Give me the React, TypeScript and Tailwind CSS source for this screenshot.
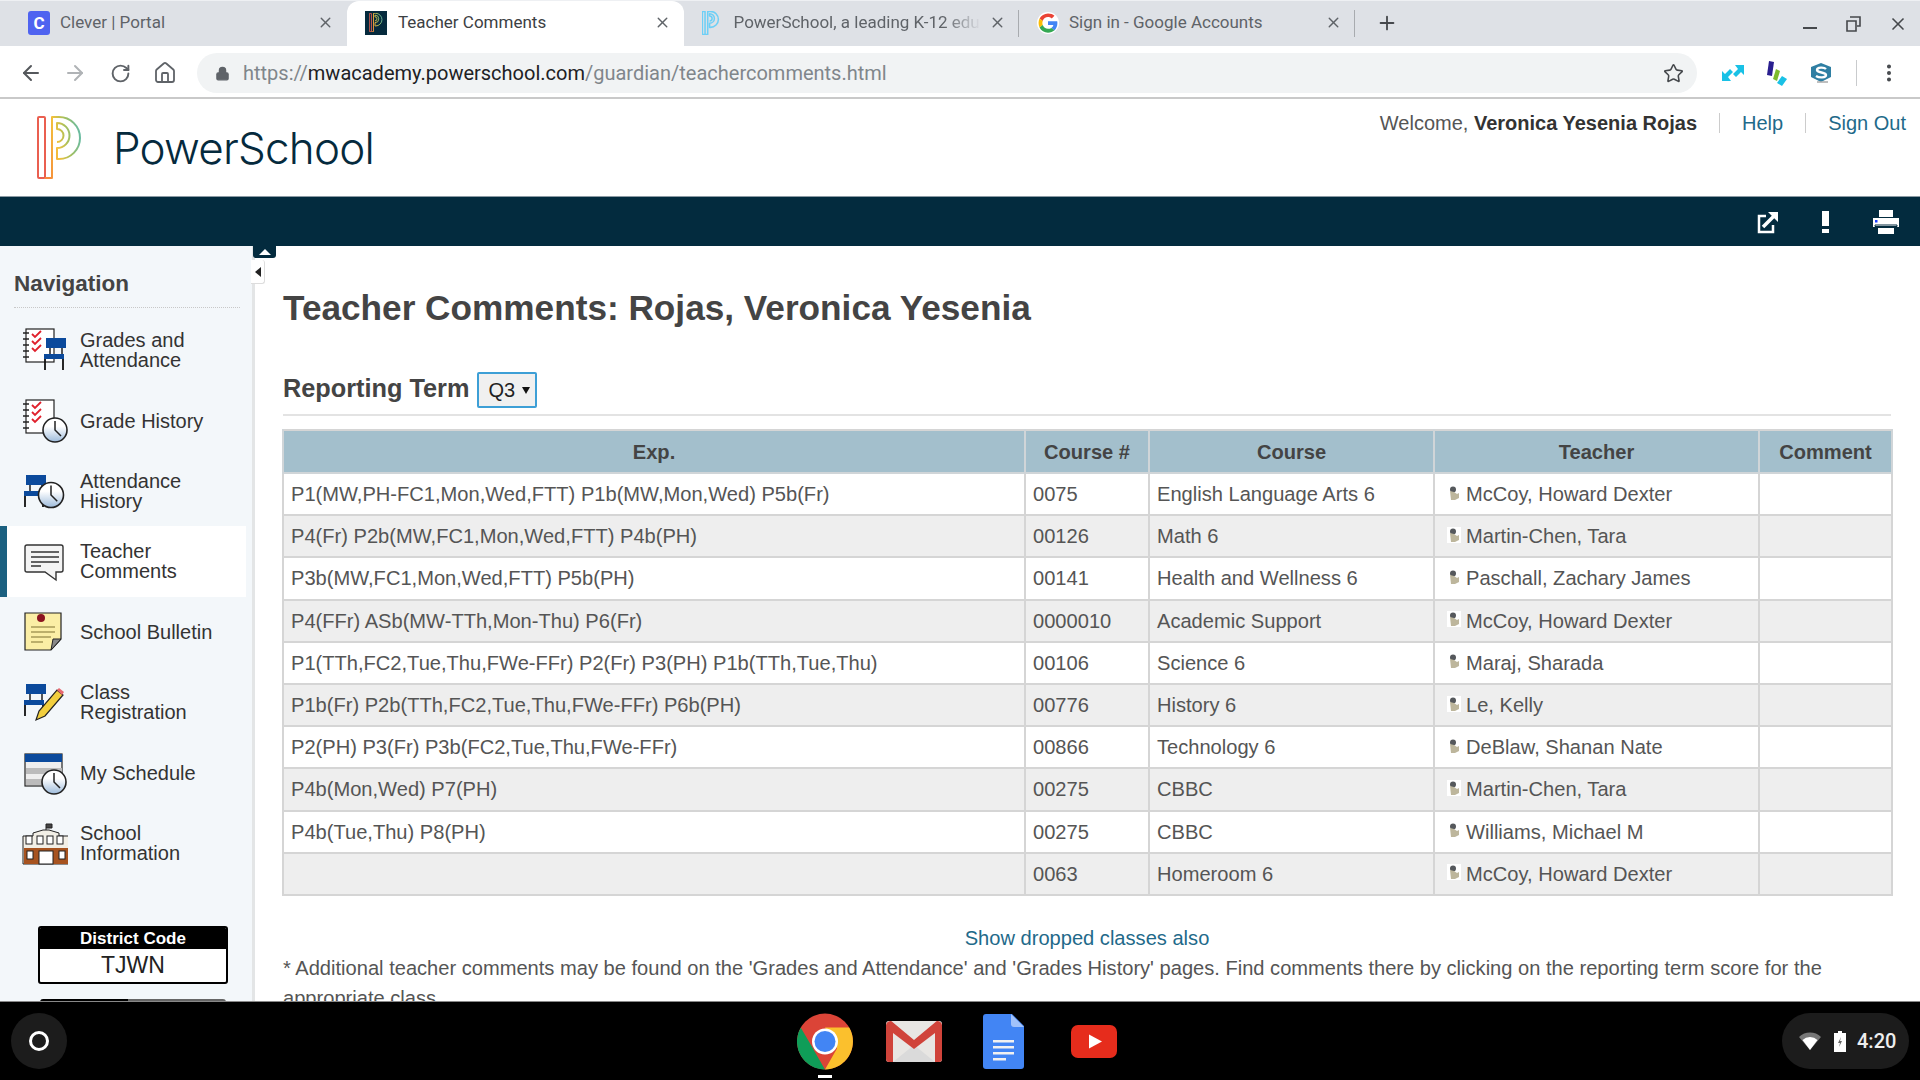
import type { ReactNode } from "react";
import { ArrowLeft, ArrowRight, Home, Lock, MoreVertical, Plus, RotateCw, Star, X } from "lucide-react";

const rows = [
  ["P1(MW,PH-FC1,Mon,Wed,FTT) P1b(MW,Mon,Wed) P5b(Fr)", "0075", "English Language Arts 6", "McCoy, Howard Dexter"],
  ["P4(Fr) P2b(MW,FC1,Mon,Wed,FTT) P4b(PH)", "00126", "Math 6", "Martin-Chen, Tara"],
  ["P3b(MW,FC1,Mon,Wed,FTT) P5b(PH)", "00141", "Health and Wellness 6", "Paschall, Zachary James"],
  ["P4(FFr) ASb(MW-TTh,Mon-Thu) P6(Fr)", "0000010", "Academic Support", "McCoy, Howard Dexter"],
  ["P1(TTh,FC2,Tue,Thu,FWe-FFr) P2(Fr) P3(PH) P1b(TTh,Tue,Thu)", "00106", "Science 6", "Maraj, Sharada"],
  ["P1b(Fr) P2b(TTh,FC2,Tue,Thu,FWe-FFr) P6b(PH)", "00776", "History 6", "Le, Kelly"],
  ["P2(PH) P3(Fr) P3b(FC2,Tue,Thu,FWe-FFr)", "00866", "Technology 6", "DeBlaw, Shanan Nate"],
  ["P4b(Mon,Wed) P7(PH)", "00275", "CBBC", "Martin-Chen, Tara"],
  ["P4b(Tue,Thu) P8(PH)", "00275", "CBBC", "Williams, Michael M"],
  ["", "0063", "Homeroom 6", "McCoy, Howard Dexter"],
];

function Notebook({ x = 0 }: { x?: number }) {
  return (
    <g transform={`translate(${x} 0)`}>
      <rect x="4" y="1" width="28" height="33" fill="#fff" stroke="#222" strokeWidth="1.2" />
      {[5, 11, 17, 23, 29].map((y) => (
        <path key={y} d={`M1 ${y}h6`} stroke="#222" strokeWidth="1.5" />
      ))}
      {[6, 13, 20].map((y) => (
        <path key={y} d={`M10 ${y}l3 3 6-6`} fill="none" stroke="#e0202c" strokeWidth="1.8" />
      ))}
    </g>
  );
}

function Clock({ cx, cy, r }: { cx: number; cy: number; r: number }) {
  return (
    <g>
      <defs>
        <linearGradient id="clockFill" x1="0" y1="0" x2="0" y2="1">
          <stop offset="0.35" stopColor="#fff" />
          <stop offset="1" stopColor="#9dbbdb" />
        </linearGradient>
      </defs>
      <circle cx={cx} cy={cy} r={r} fill="url(#clockFill)" stroke="#222" strokeWidth="1.6" />
      <path d={`M${cx} ${cy - r + 3}V${cy}l${r * 0.5} ${r * 0.5}`} fill="none" stroke="#222" strokeWidth="1.5" />
    </g>
  );
}

function Desk({ x = 0, y = 0 }: { x?: number; y?: number }) {
  return (
    <g transform={`translate(${x} ${y})`}>
      <rect x="2" y="0" width="20" height="10" fill="#0b4a9c" />
      <path d="M6 10v6M18 10v6" stroke="#111" strokeWidth="1.4" />
      <rect x="0" y="16" width="20" height="5" fill="#0b4a9c" />
      <path d="M1 21v11M19 21v11" stroke="#111" strokeWidth="1.8" />
    </g>
  );
}

function NavIcon({ name }: { name: string }) {
  return (
    <svg width="46" height="44" viewBox="0 0 46 44" className="shrink-0">
      {name === "grades" && (
        <>
          <Notebook />
          <g transform="translate(22 10)"><Desk /></g>
        </>
      )}
      {name === "gradeHistory" && (
        <>
          <Notebook />
          <Clock cx={33} cy={31} r={12} />
        </>
      )}
      {name === "attendance" && (
        <>
          <g transform="translate(2 6)"><Desk /></g>
          <Clock cx={29} cy={26} r={12.5} />
        </>
      )}
      {name === "comments" && (
        <path
          d="M5 6h34a2 2 0 0 1 2 2v23a2 2 0 0 1-2 2h-5v8l-11-8H5a2 2 0 0 1-2-2V8a2 2 0 0 1 2-2zM9 13h28M9 18h28M9 23h28M9 27h10"
          fill="#f4f4f4"
          stroke="#333"
          strokeWidth="1.4"
        />
      )}
      {name === "bulletin" && (
        <>
          <path d="M3 3h36v26l-10 11H3z" fill="#fbeea5" stroke="#222" strokeWidth="1.2" />
          <path d="M29 40l2-11h8z" fill="#888" stroke="#222" />
          <path d="M9 17h24M9 22h24M9 27h20M9 32h12" stroke="#a89a58" strokeWidth="1.4" />
          <circle cx="19" cy="8" r="4" fill="#8c1420" />
        </>
      )}
      {name === "registration" && (
        <>
          <Desk x={2} y={4} />
          <path d="M14 40l3-9 18-21 6 5-18 21z" fill="#f2cf3e" stroke="#222" strokeWidth="1.2" />
          <path d="M35 10l2-2 5 4-2 3z" fill="#e8686f" />
        </>
      )}
      {name === "schedule" && (
        <>
          <rect x="3" y="3" width="37" height="32" fill="#eee" stroke="#222" strokeWidth="1.2" />
          <rect x="3" y="3" width="37" height="8" fill="#0b4a9c" />
          <rect x="4" y="17" width="36" height="6" fill="#bbb" />
          <rect x="4" y="28" width="36" height="6" fill="#bbb" />
          <Clock cx={32} cy={31} r={12} />
        </>
      )}
      {name === "school" && (
        <>
          <path d="M24 3v8M24 3h6v4h-6" fill="#444" stroke="#222" />
          <path d="M1 15h10v-3l10-3h6l10 3v3h10v28H1z" fill="#f2efe6" stroke="#222" />
          <rect x="2" y="27" width="44" height="16" fill="#a7531f" />
          {[4, 15, 25, 35].map((x) => (
            <rect key={x} x={x} y="15" width="6" height="8" fill="#fff" stroke="#222" />
          ))}
          <rect x="5" y="30" width="6" height="8" fill="#fff" stroke="#222" />
          <rect x="37" y="30" width="6" height="8" fill="#fff" stroke="#222" />
          <rect x="17" y="30" width="14" height="13" fill="#fff" stroke="#222" />
        </>
      )}
    </svg>
  );
}

function NavItem({ icon, label, active }: { icon: string; label: ReactNode; active?: boolean }) {
  return (
    <div
      className={`flex h-[70.4px] items-center text-[20px] leading-[20px] text-[#333] ${
        active ? "-ml-[2px] w-[246px] border-l-[7px] border-[#1b6080] bg-white pl-[15px]" : "pl-[20px]"
      }`}
    >
      <NavIcon name={icon} />
      <div className="ml-[12px]">{label}</div>
    </div>
  );
}

function PLogo({ size, mono, width = 1.3 }: { size: number; mono?: string; width?: number }) {
  const grad = mono ?? "url(#psGrad)";
  return (
    <svg width={(size * 46) / 63} height={size} viewBox="0 0 46 63" fill="none" className="shrink-0">
      <defs>
        <linearGradient id="psGrad" x1="0" y1="0.6" x2="1" y2="0.3">
          <stop offset="0" stopColor="#f6883a" />
          <stop offset="0.35" stopColor="#f3c13c" />
          <stop offset="0.65" stopColor="#a9c05a" />
          <stop offset="1" stopColor="#69bba0" />
        </linearGradient>
      </defs>
      <rect x="1" y="1" width="7" height="61" rx="1" stroke={mono ?? "#ea5f50"} strokeWidth={width} />
      <path
        d="M8 62h7V1h7a21 21 0 0 1 0 42h-2V32a12.500 12.500 0 0 0 0-25v6a6.500 6.500 0 0 1 0 13"
        stroke={grad}
        strokeWidth={width}
        strokeLinejoin="round"
      />
    </svg>
  );
}

function Tab({
  width,
  icon,
  title,
  active,
  fade,
  divider,
}: {
  width: string;
  icon: ReactNode;
  title: string;
  active?: boolean;
  fade?: boolean;
  divider?: boolean;
}) {
  return (
    <div
      className={`flex h-[45px] shrink-0 items-center pb-[2px] pl-[28px] pr-[13px] ${width} ${
        active ? "rounded-t-[12px] bg-white text-[#3c4043]" : "text-[#5f6368]"
      } ${divider ? "relative after:absolute after:right-0 after:top-[9px] after:h-[27px] after:w-px after:bg-[#a8abaf]" : ""}`}
    >
      {icon}
      <span className={`ml-[10px] min-w-0 flex-1 overflow-hidden whitespace-nowrap text-[17px] ${fade ? "[mask-image:linear-gradient(to_right,#000_85%,transparent)]" : ""}`}>
        {title}
      </span>
      <X size={17} strokeWidth={2} className="ml-2 shrink-0 text-[#5f6368]" />
    </div>
  );
}

function GoogleG() {
  return (
    <svg width="22" height="22" viewBox="0 0 48 48" className="shrink-0">
      <circle cx="24" cy="24" r="24" fill="#fff" />
      <path fill="#EA4335" d="M24 11c3.3 0 6 1.2 8.200 3.100l5.900-5.900C34.500 4.900 29.700 3 24 3 16 3 9 7.600 5.600 14.300l6.900 5.300C14.200 14.600 18.700 11 24 11z" />
      <path fill="#4285F4" d="M44.500 24.700c0-1.500-.1-2.900-.4-4.300H24v8.200h11.600c-.5 2.700-2 4.900-4.300 6.400l6.700 5.200c4-3.600 6.500-9 6.500-15.500z" />
      <path fill="#FBBC05" d="M12.500 28.400c-.5-1.400-.8-2.900-.8-4.400s.3-3 .8-4.400l-6.900-5.300C4.200 17.200 3.400 20.500 3.400 24s.8 6.800 2.200 9.700l6.900-5.300z" />
      <path fill="#34A853" d="M24 45c5.700 0 10.400-1.900 13.900-5.100l-6.700-5.200c-1.900 1.300-4.300 2-7.200 2-5.300 0-9.800-3.600-11.500-8.400l-6.900 5.300C9 40.400 16 45 24 45z" />
    </svg>
  );
}

function ChromeIcon() {
  return (
    <svg width="56" height="57" viewBox="0 0 56 56">
      <circle cx="28" cy="28" r="28" fill="#db4437" />
      <path d="M28 28l-12 7.300L28 56a28 28 0 0 1-24.300-42L16 35z" fill="#0f9d58" />
      <path d="M28 56A28 28 0 0 0 52.200 14H28l12 21z" fill="#fbc02d" />
      <circle cx="28" cy="28" r="13" fill="#fff" />
      <circle cx="28" cy="28" r="10.500" fill="#4285f4" />
    </svg>
  );
}

function GmailIcon() {
  return (
    <svg width="56" height="41" viewBox="0 0 56 41">
      <rect width="56" height="41" rx="3" fill="#e8e6e3" />
      <path d="M7 41L28 24l21 17z" fill="#dadada" />
      <path d="M0 4a4 4 0 0 1 7-2.500L28 19 49 1.500A4 4 0 0 1 56 4v34a3 3 0 0 1-3 3h-4V12L28 28 7 12v29H3a3 3 0 0 1-3-3z" fill="#d0433a" />
    </svg>
  );
}

function DocsIcon() {
  return (
    <svg width="41" height="55" viewBox="0 0 41 55">
      <path d="M3 0h26l12 12v40a3 3 0 0 1-3 3H3a3 3 0 0 1-3-3V3a3 3 0 0 1 3-3z" fill="#4285f4" />
      <path d="M28 0l13 13H31a3 3 0 0 1-3-3z" fill="#a1c2fa" />
      <path d="M10 26h21v2.500H10zM10 32h21v2.500H10zM10 38h21v2.500H10zM10 44h13v2.500H10z" fill="#f1f1f1" />
    </svg>
  );
}

function YouTubeIcon() {
  return (
    <svg width="46" height="33" viewBox="0 0 46 33">
      <rect width="46" height="33" rx="7" fill="#e62c1c" />
      <path d="M18 9.500v14l13-7z" fill="#fff" />
    </svg>
  );
}

export default function App() {
  return (
    <div className="flex h-screen w-screen flex-col overflow-hidden bg-white font-['Liberation_Sans',Arial,sans-serif]">
      {/* browser tabs */}
      <div className="flex h-[46px] shrink-0 items-center border-t border-[#eef0f3] bg-[#dee1e6] font-['Roboto',sans-serif]">
        <Tab
          width="w-[347px]"
          title="Clever | Portal"
          icon={
            <div className="grid h-[24px] w-[22px] shrink-0 place-items-center rounded-[3px] bg-[#4f63f0] text-[17px] font-bold text-white">C</div>
          }
        />
        <Tab
          width="w-[337px]"
          active
          title="Teacher Comments"
          icon={
            <div className="-ml-[10px] mr-[1px] grid h-[24px] w-[22px] shrink-0 place-items-center bg-[#052a3d]">
              <PLogo size={19} width={3} />
            </div>
          }
        />
        <Tab
          width="w-[335px]"
          divider
          fade
          title="PowerSchool, a leading K-12 edu"
          icon={<div className="-ml-[10px] mr-[4px]"><PLogo size={24} mono="#6dcff6" width={4} /></div>}
        />
        <Tab width="w-[336px]" divider title="Sign in - Google Accounts" icon={<div className="-ml-[10px]"><GoogleG /></div>} />
        <Plus size={22} strokeWidth={2} className="mb-[2px] ml-[21px] text-[#45484c]" />
        <div className="ml-auto flex items-center pr-[12px] text-[#45484c]">
          <div className="mt-[8px] h-[2px] w-[14px] bg-[#45484c]" />
          <svg width="16" height="16" viewBox="0 0 16 16" fill="none" stroke="#45484c" strokeWidth="1.600" className="ml-[28px]">
            <path d="M5 1h10v9h-3M2 5h9v10H2z" />
          </svg>
          <X size={20} strokeWidth={2} className="ml-[27px]" />
        </div>
      </div>

      {/* toolbar */}
      <div className="flex h-[53px] shrink-0 items-center border-b-2 border-[#c9c9c9] bg-white pt-[3px] text-[#5f6368]">
        <ArrowLeft size={24} strokeWidth={2} className="ml-[19px] text-[#55585c]" />
        <ArrowRight size={24} strokeWidth={2} className="ml-[20px] text-[#b0b3b6]" />
        <RotateCw size={21} strokeWidth={2.2} className="ml-[23px]" />
        <Home size={24} strokeWidth={1.8} className="ml-[22px]" />
        <div className="ml-[20px] flex h-[40px] w-[1500px] items-center rounded-full bg-[#f1f3f4] pl-[18px] pr-[13px] font-['Roboto',sans-serif] text-[20px]">
          <Lock size={15} fill="#5f6368" strokeWidth={2} />
          <span className="ml-[13px] text-[#80868b]">
            https://<span className="text-[#202124]">mwacademy.powerschool.com</span>/guardian/teachercomments.html
          </span>
          <Star size={21} strokeWidth={1.8} className="ml-auto text-[#45484c]" />
        </div>
        <svg width="24" height="18" viewBox="0 0 24 18" className="ml-[24px]" fill="#19c1e6">
          <path d="M1 17V7l3 3 5-5 3 3-5 5 3 4z" />
          <path d="M23 1v10l-3-3-5 5-3-3 5-5-3-4z" />
        </svg>
        <svg width="22" height="26" viewBox="0 0 22 26" className="ml-[21px]">
          <path d="M3 1l5 1-2 14-5-1z" fill="#2a1f8f" />
          <path d="M10 9l4 2-3 10-4-2z" fill="#7dbb2c" />
          <path d="M16 16l5 3-5 7-5-3z" fill="#19c1e6" />
        </svg>
        <svg width="22" height="22" viewBox="0 0 22 22" className="ml-[22px]">
          <path d="M1 5l10-4 10 4v10l-10 5-10-5z" fill="#2f7fa3" />
          <path d="M16 7c-2-2-9-2-9 1s9 2 9 5-7 3-10 1" fill="none" stroke="#fff" strokeWidth="2.400" />
          <path d="M7 20h11" stroke="#aaa" strokeWidth="1.500" />
        </svg>
        <div className="ml-[24px] h-[26px] w-px bg-[#c9cbcd]" />
        <MoreVertical size={22} strokeWidth={2.4} className="ml-[21px] text-[#45484c]" />
      </div>

      {/* site header */}
      <div className="flex h-[97px] shrink-0 justify-between bg-white">
        <div className="flex items-center pl-[37px]">
          <PLogo size={63} width={2} />
          <span className="ml-[30px] font-['Inter',sans-serif] text-[44px] font-light tracking-[-0.8px] text-[#052a3d]">PowerSchool</span>
        </div>
        <div className="flex h-[48px] items-center pr-[14px] text-[20px] text-[#555]">
          <span>
            Welcome, <b className="text-[#333]">Veronica Yesenia Rojas</b>
          </span>
          <span className="mx-[22px] h-[20px] w-px bg-[#ccc]" />
          <span className="text-[#1f6a8a]">Help</span>
          <span className="mx-[22px] h-[20px] w-px bg-[#ccc]" />
          <span className="text-[#1f6a8a]">Sign Out</span>
        </div>
      </div>

      {/* dark bar */}
      <div className="flex h-[50px] shrink-0 items-center justify-end border-t border-[#8b9aa3] bg-[#032b3e] pr-[20px]">
        <svg width="22" height="24" viewBox="0 0 22 24" fill="none" stroke="#fff" strokeWidth="2.500">
          <path d="M9 6H2v16h14v-7" />
          <path d="M6 17L19 4" strokeWidth="3.500" />
          <path d="M11 2h10v10z" fill="#fff" stroke="none" />
        </svg>
        <div className="ml-[43px] flex h-[22px] w-[7px] flex-col justify-between">
          <div className="h-[15px] w-full bg-white" />
          <div className="h-[4px] w-full bg-white" />
        </div>
        <svg width="28" height="24" viewBox="0 0 28 24" className="ml-[43px]" fill="#fff">
          <path d="M7 0h14v7H7zM1 8h26v9H1zM6 18h16v6H6z" />
          <path d="M3 15h22v1.500H3z" stroke="#032b3e" strokeWidth="1" />
          <rect x="3" y="10" width="2.500" height="2.500" fill="#1b3cff" />
        </svg>
      </div>

      <div className="relative flex min-h-0 flex-1">
        {/* sidebar */}
        <aside className="relative w-[255px] shrink-0 overflow-hidden border-r-[3px] border-r-[#e3e5e6] bg-[#f3f7fa] pl-[2px]">
          <div className="ml-[12px] mt-[23px] w-[226px] border-b border-dotted border-[#c8c8c8] pb-[8px] text-[22.500px] font-bold leading-[30px] text-[#444]">
            Navigation
          </div>
          <div className="mt-[7px]">
            <NavItem icon="grades" label={<>Grades and<br />Attendance</>} />
            <NavItem icon="gradeHistory" label="Grade History" />
            <NavItem icon="attendance" label={<>Attendance<br />History</>} />
            <NavItem icon="comments" label={<>Teacher<br />Comments</>} active />
            <NavItem icon="bulletin" label="School Bulletin" />
            <NavItem icon="registration" label={<>Class<br />Registration</>} />
            <NavItem icon="schedule" label="My Schedule" />
            <NavItem icon="school" label={<>School<br />Information</>} />
          </div>
          <div className="ml-[36px] mt-[48px] w-[190px] overflow-hidden rounded-[3px] border-2 border-black bg-white text-center">
            <div className="h-[21px] bg-black text-[17px] font-bold leading-[21px] text-white">District Code</div>
            <div className="h-[33px] text-[23px] leading-[33px] text-[#222]">TJWN</div>
          </div>
          <div className="ml-[38px] mt-[15px] flex h-[6px] w-[186px] overflow-hidden rounded-t-[3px]">
            <div className="w-[88px] bg-black" />
            <div className="flex-1 bg-[#666]" />
          </div>
        </aside>

        {/* collapse handles */}
        <div className="absolute left-[253px] top-0 grid h-[12px] w-[23px] place-items-center rounded-b-[3px] bg-[#032b3e]">
          <div className="h-0 w-0 border-x-[6px] border-b-[6px] border-x-transparent border-b-white" />
        </div>
        <div className="absolute left-[251px] top-[14px] grid h-[24px] w-[14px] place-items-center rounded-r-[3px] border-r border-b border-[#ddd] bg-white">
          <div className="h-0 w-0 border-y-[5px] border-r-[6px] border-y-transparent border-r-[#222]" />
        </div>

        {/* main content */}
        <main className="min-w-0 flex-1 overflow-hidden pl-[28px] pr-[29px] text-[20.1px] text-[#555]">
          <h1 className="mt-[42px] text-[35.200px] font-bold leading-[40px] text-[#444]">Teacher Comments: Rojas, Veronica Yesenia</h1>
          <div className="mt-[44px] flex h-[44px] items-start border-b-2 border-[#e3e3e3]">
            <span className="-mt-[2px] text-[25.300px] font-bold leading-[36px] text-[#444]">Reporting Term</span>
            <div className="ml-[8px] flex h-[36px] w-[60px] items-center justify-between rounded-[2px] border-2 border-[#3d9fd6] bg-[#f0f0f0] pl-[9px] pr-[5px] text-[20px] text-[#222]">
              Q3
              <span className="h-0 w-0 border-x-[4px] border-t-[7px] border-x-transparent border-t-[#111]" />
            </div>
          </div>
          <table className="-ml-[1px] mt-[13px] w-[1609px] table-fixed border-collapse border-2 border-[#d5d5d5] leading-[24px]">
            <colgroup>
              <col className="w-[742px]" />
              <col className="w-[124px]" />
              <col className="w-[285px]" />
              <col className="w-[325px]" />
              <col className="w-[133px]" />
            </colgroup>
            <thead>
              <tr className="h-[43px] bg-[#a3bfcc] font-bold text-[#444]">
                {["Exp.", "Course #", "Course", "Teacher", "Comment"].map((h) => (
                  <th key={h} className="border-x-2 border-b-2 border-[#d0d5d8] p-0 text-center font-bold">
                    {h}
                  </th>
                ))}
              </tr>
            </thead>
            <tbody>
              {rows.map((row, i) => (
                <tr key={i} className={`h-[42.2px] ${i % 2 ? "bg-[#eeeeee]" : "bg-white"}`}>
                  <td className="border-2 border-[#d5d5d5] px-[7px] py-0">{row[0]}</td>
                  <td className="border-2 border-[#d5d5d5] px-[7px] py-0">{row[1]}</td>
                  <td className="border-2 border-[#d5d5d5] px-[7px] py-0">{row[2]}</td>
                  <td className="border-2 border-[#d5d5d5] px-[12px] py-0">
                    <div className="flex items-center">
                      <svg width="14" height="16" viewBox="0 0 14 16" className="-mt-[3px] mr-[5px] shrink-0 bg-white">
                        <circle cx="6" cy="4.500" r="3" fill="#55585c" />
                        <path d="M3 6l4 1 3 2 2-1v5l-4 2H4z" fill="#bdb69c" />
                      </svg>
                      {row[3]}
                    </div>
                  </td>
                  <td className="border-2 border-[#d5d5d5] p-0" />
                </tr>
              ))}
            </tbody>
          </table>
          <div className="mt-[30px] text-center leading-[24px] text-[#1f6a8a]">Show dropped classes also</div>
          <p className="mt-[3px] leading-[30px]">
            * Additional teacher comments may be found on the 'Grades and Attendance' and 'Grades History' pages. Find comments there by clicking on the reporting term score for the appropriate class.
          </p>
        </main>
      </div>

      {/* chromeos shelf */}
      <div className="grid h-[79px] shrink-0 grid-cols-[1fr_auto_1fr] items-center border-t border-[#888] bg-black">
        <div className="pl-[11px]">
          <div className="grid h-[56px] w-[56px] place-items-center rounded-full bg-[#1c1c1c]">
            <div className="h-[20px] w-[20px] rounded-full border-[3px] border-white" />
          </div>
        </div>
        <div className="mr-[6px] flex items-center">
          <div className="relative"><ChromeIcon /><div className="absolute left-[21px] top-[62px] h-[3px] w-[14px] bg-white" /></div>
          <div className="ml-[33px]"><GmailIcon /></div>
          <div className="ml-[41px]"><DocsIcon /></div>
          <div className="ml-[47px]"><YouTubeIcon /></div>
        </div>
        <div className="flex justify-end pr-[11px]">
          <div className="flex h-[56px] w-[127px] items-center rounded-full bg-[#1c1c1c] pl-[17px] font-['Roboto',sans-serif] text-[20px] font-medium text-[#eee]">
            <svg width="22" height="18" viewBox="0 0 22 18">
              <path d="M0 5a16 16 0 0 1 22 0L11 18z" fill="#777" />
              <path d="M3.500 8a11 11 0 0 1 15 0L11 18z" fill="#fff" />
            </svg>
            <svg width="12" height="21" viewBox="0 0 12 21" className="ml-[13px]">
              <path d="M4 0h4v2h4v19H0V2h4z" fill="#fff" />
              <path d="M7 6L4 12h2l-1 4 3-6H6z" fill="#666" />
            </svg>
            <span className="ml-[11px]">4:20</span>
          </div>
        </div>
      </div>
    </div>
  );
}
